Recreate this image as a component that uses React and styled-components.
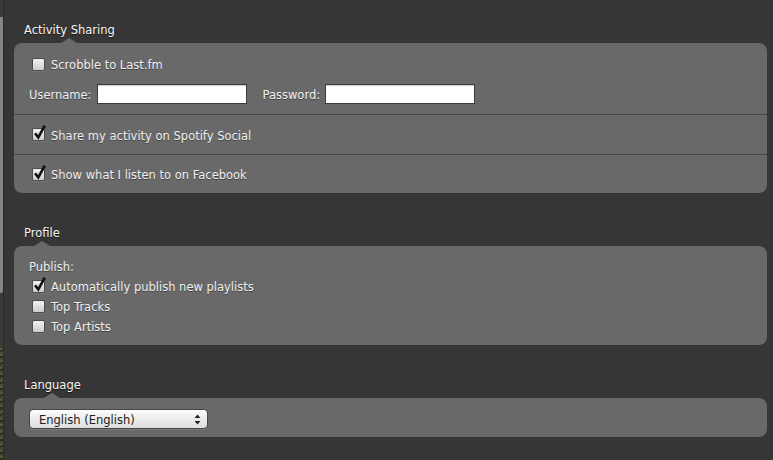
import styled, { createGlobalStyle } from 'styled-components';

const GlobalStyle = createGlobalStyle`
    html, body {
        margin: 0;
        padding: 0;
        background: #363636;
    }
    body {
        font-family: "DejaVu Sans", "Liberation Sans", sans-serif;
        font-size: 11.5px;
        color: #f0f0f0;
    }
`

const Check = ({ checked, label }) => (
    <CheckRow>
        <Box>
            {checked && (
                <svg width="15" height="17" viewBox="0 0 15 17">
                    <path d="M3 9.2 L6.3 13.4 L12.8 1.6" fill="none" stroke="#111" strokeWidth="2.6" />
                </svg>
            )}
        </Box>
        <Text>{label}</Text>
    </CheckRow>
)

const App = () => {
    return (
        <Wrapper>
            <GlobalStyle />
            <Edge>
                <Thumb />
                <Gap />
                <Texture />
            </Edge>
            <Content>
                <Section>
                    <Title>Activity Sharing</Title>
                    <Panel>
                        <Row $first>
                            <Check label="Scrobble to Last.fm" />
                            <FieldRow>
                                <Label>Username:</Label>
                                <Input />
                                <Label $spaced>Password:</Label>
                                <Input type="password" />
                            </FieldRow>
                        </Row>
                        <Row>
                            <Check checked label="Share my activity on Spotify Social" />
                        </Row>
                        <Row $last>
                            <Check checked label="Show what I listen to on Facebook" />
                        </Row>
                    </Panel>
                </Section>

                <Section>
                    <Title>Profile</Title>
                    <Panel $pad="10px 15px 9px">
                        <Line>Publish:</Line>
                        <Check checked label="Automatically publish new playlists" />
                        <Check label="Top Tracks" />
                        <Check label="Top Artists" />
                    </Panel>
                </Section>

                <Section>
                    <Title>Language</Title>
                    <Panel $pad="11px 15px 8px">
                        <Select>
                            <Text>English (English)</Text>
                            <svg width="7" height="11" viewBox="0 0 7 11">
                                <path d="M3.5 0.5 L6.5 4 L0.5 4 Z" fill="#222" />
                                <path d="M3.5 10.5 L6.5 7 L0.5 7 Z" fill="#222" />
                            </svg>
                        </Select>
                    </Panel>
                </Section>
            </Content>
        </Wrapper>
    )
}

const Wrapper = styled.main`
    display: flex;
    width: 773px;
    height: 460px;
    overflow: hidden;
    background: #363636;
`

const Edge = styled.aside`
    width: 3px;
    flex-shrink: 0;
    display: flex;
    flex-direction: column;
    padding-top: 17px;
    border-right: 1px solid #2a2a2a;
    background: #3a3a3a;
`

const Thumb = styled.div`
    height: 276px;
    background: #858585;
    border-radius: 0 0 2px 0;
`

const Gap = styled.div`
    flex: 1;
`

const Texture = styled.div`
    height: 112px;
    background: repeating-linear-gradient(160deg, #5a553d 0 2px, #2f2d22 2px 4px, #4a4632 4px 6px);
`

const Content = styled.div`
    flex: 1;
    padding: 22px 6px 0 10px;
`

const Section = styled.section`
    display: flex;
    flex-direction: column;
    align-items: flex-start;
    margin-bottom: 32px;
`

const Title = styled.h2`
    position: relative;
    margin: 0 0 6px 10px;
    padding-top: 1px;
    height: 15px;
    box-sizing: border-box;
    font-size: 11.5px;
    font-weight: normal;
    line-height: 15px;
    color: #f6f6f6;
    text-shadow: 0 1px 0 rgba(0, 0, 0, 0.6);
    &::after{
        content: '';
        position: absolute;
        left: 50%;
        top: 16px;
        transform: translateX(-50%);
        border-left: 8px solid transparent;
        border-right: 8px solid transparent;
        border-bottom: 5px solid #696969;
    }
`

const Panel = styled.div`
    align-self: stretch;
    background: #696969;
    border-radius: 8px;
    padding: ${props => props.$pad || '0'};
`

const Row = styled.div`
    padding: ${props => props.$first ? '11px 15px 10px' : '0 15px'};
    height: ${props => props.$first ? 'auto' : props.$last ? '38px' : '39px'};
    display: flex;
    flex-direction: column;
    justify-content: center;
    border-bottom: ${props => props.$last ? 'none' : '1px solid #474747'};
`

const CheckRow = styled.label`
    display: flex;
    align-items: center;
    height: 20px;
    gap: 6px;
    padding-left: 3px;
`

const Text = styled.span`
    padding-top: 2px;
    text-shadow: 0 1px 0 rgba(0, 0, 0, 0.4);
`

const Box = styled.span`
    position: relative;
    width: 13px;
    height: 13px;
    box-sizing: border-box;
    border: 1px solid #4c4c4c;
    border-radius: 2px;
    background: linear-gradient(#f2f2f2, #cdcdcd);
    box-shadow: 0 1px 0 rgba(255, 255, 255, 0.08);
    svg{
        position: absolute;
        left: -1px;
        top: -5px;
    }
`

const FieldRow = styled.div`
    display: flex;
    align-items: center;
    margin-top: 10px;
    height: 20px;
`

const Label = styled.span`
    padding-top: 2px;
    margin-left: ${props => props.$spaced ? '16px' : '0'};
    margin-right: 5px;
    text-shadow: 0 1px 0 rgba(0, 0, 0, 0.4);
`

const Input = styled.input`
    width: 150px;
    height: 20px;
    box-sizing: border-box;
    margin: 0;
    border: 1px solid #3c3c3c;
    background: #fff;
    box-shadow: inset 0 1px 1px rgba(0, 0, 0, 0.2);
    outline: none;
`

const Line = styled.div`
    height: 20px;
    line-height: 20px;
    padding-top: 1px;
    box-sizing: border-box;
    text-shadow: 0 1px 0 rgba(0, 0, 0, 0.4);
`

const Select = styled.div`
    width: 179px;
    height: 20px;
    box-sizing: border-box;
    display: flex;
    align-items: center;
    justify-content: space-between;
    padding: 0 6px 0 9px;
    border: 1px solid #474747;
    border-radius: 4px;
    background: linear-gradient(#fdfdfd, #ececec 50%, #dedede);
    color: #222;
    box-shadow: 0 1px 0 rgba(255, 255, 255, 0.1);
    span{
        text-shadow: none;
        padding-top: 1px;
    }
`

export default App
